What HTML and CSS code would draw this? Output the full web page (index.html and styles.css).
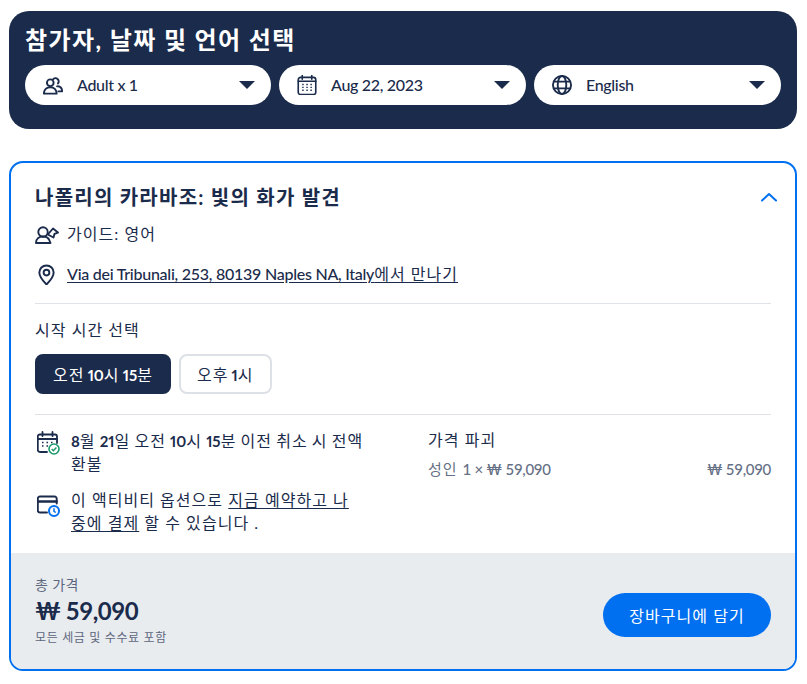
FILE: index.html
```html
<!DOCTYPE html>
<html lang="ko">
<head>
<meta charset="utf-8">
<title>참가자, 날짜 및 언어 선택</title>
<link rel="stylesheet" href="styles.css">
</head>
<body>
<section class="picker">
  <h1 class="picker-title">참가자, 날짜 및 언어 선택</h1>
  <div class="picker-row">
    <div class="pill">
      <svg class="pill-icon" viewBox="1 1 22 22" fill="none" stroke="#1b2b4b" stroke-width="2.100" stroke-linejoin="round" stroke-linecap="round"><circle cx="9" cy="9.500" r="3.700"/><path d="M2 21.500c0-4.500 3-7 7-7s7 2.500 7 7z"/><path d="M12 5.800a3.500 3.500 0 1 1 5.500 4.500"/><path d="M16.500 13.500c3.500-.5 5.500 2 5.500 5.500h-4"/></svg>
      <span class="pill-label la">Adult x 1</span>
      <span class="caret"></span>
    </div>
    <div class="pill">
      <svg class="pill-icon" viewBox="2 1 20 21" fill="none" stroke="#1b2b4b" stroke-width="1.700" stroke-linecap="round"><rect x="2.800" y="3.500" width="18.400" height="18" rx="2.500"/><path d="M7 1.500v4M17 1.500v4M2.800 7.500h18.400"/><path d="M7 11h1.500M11.300 11h1.500M15.600 11h1.500M7 14h1.500M11.300 14h1.500M15.600 14h1.500M7 17h1.500M11.300 17h1.500M15.600 17h1.500" stroke-width="1.500" stroke-linecap="butt"/></svg>
      <span class="pill-label la">Aug 22, 2023</span>
      <span class="caret"></span>
    </div>
    <div class="pill">
      <svg class="pill-icon" viewBox="1.500 1.500 21 21" fill="none" stroke="#1b2b4b" stroke-width="2"><circle cx="12" cy="12" r="9.500"/><ellipse cx="12" cy="12" rx="4.500" ry="9.500"/><path d="M3 8.500h18M3 15.500h18"/></svg>
      <span class="pill-label la">English</span>
      <span class="caret"></span>
    </div>
  </div>
</section>

<section class="card">
  <div class="card-body">
    <div class="card-head">
      <h2 class="card-title">나폴리의 카라바조: 빛의 화가 발견</h2>
      <svg class="chevron" viewBox="0 0 18 10" fill="none" stroke="#0070f0" stroke-width="2" stroke-linecap="round" stroke-linejoin="round"><path d="M2 8.500 9 2l7 6.500"/></svg>
    </div>
    <div class="meta guide">
      <svg class="meta-icon" viewBox="0 0 24 20" fill="none" stroke="#1b2b4b" stroke-width="1.900" stroke-linejoin="round" stroke-linecap="round"><circle cx="8" cy="7" r="4.700"/><path d="M1 18c0-4 3-6.500 7-6.500 2.500 0 5 1 6 3l1.500 3.500z"/><path d="M12.800 9.500 18 3.500l5 4-3.500 1.300-1 3.700z"/></svg>
      <span>가이드: 영어</span>
    </div>
    <div class="meta location">
      <svg class="meta-icon pin" viewBox="3.500 1 17 22" fill="none" stroke="#1b2b4b" stroke-width="2"><path d="M12 22.500C7 17.500 4.500 13.800 4.500 10a7.500 7.500 0 0 1 15 0c0 3.800-2.500 7.500-7.500 12.500z" stroke-linejoin="round"/><circle cx="12" cy="10" r="3"/></svg>
      <a class="link" href="#"><span class="la link-la">Via dei Tribunali, 253, 80139 Naples NA, Italy</span>에서 만나기</a>
    </div>
    <hr class="rule rule-a">
    <div class="time-label">시작 시간 선택</div>
    <div class="times">
      <button class="time time-on">오전 <span class="num">10</span>시 <span class="num">15</span>분</button>
      <button class="time">오후 <span class="num">1</span>시</button>
    </div>
    <hr class="rule rule-b">
    <div class="details">
      <div class="notes">
        <div class="note note-refund">
          <svg class="note-icon" viewBox="1 0 23 24" fill="none"><g stroke="#1b2b4b" stroke-width="1.800" stroke-linecap="round"><path d="M11 21H4a2.200 2.200 0 0 1-2.200-2.200V5.500A2 2 0 0 1 4 3.500h15a2 2 0 0 1 2 2V12"/><path d="M6.500 1v4M16.500 1v4M2 8h19"/><path d="M6 11.500h1.500M10.500 11.500H12M15 11.500h1.500M6 15h1.500M10.500 15H12" stroke-width="1.500" stroke-linecap="butt"/></g><circle cx="18" cy="18" r="5" fill="#fff" stroke="#1a9a6c" stroke-width="1.600"/><path d="m15.700 18 1.700 1.700 3-3.200" stroke="#1a9a6c" stroke-width="1.500"/></svg>
          <p class="note-text"><span class="num">8</span>월 <span class="num">21</span>일 오전 <span class="num">10</span>시 <span class="num">15</span><span>분 이전 취소 시 전액</span><br>환불</p>
        </div>
        <div class="note note-pay">
          <svg class="note-icon" viewBox="1 3 23 21" fill="none"><g stroke="#1b2b4b" stroke-width="1.900" stroke-linecap="round"><path d="M11 20H4a2.200 2.200 0 0 1-2.200-2.200V6.200A2.200 2.200 0 0 1 4 4h14.500a2.200 2.200 0 0 1 2.200 2.200V11"/><path d="M2 9h18.500" stroke-width="2.600"/></g><circle cx="18" cy="18.500" r="5" fill="#fff" stroke="#0070f0" stroke-width="2"/><path d="M18 15.800v3l1.800 1.200" stroke="#0070f0" stroke-width="1.500"/></svg>
          <p class="note-text"><span>이 액티비티 옵션으로 </span><a class="link" href="#">지금 예약하고 나</a><br><a class="link" href="#">중에 결제</a><span> 할 수 있습니다 .</span></p>
        </div>
      </div>
      <div class="breakdown">
        <div class="breakdown-title">가격 파괴</div>
        <div class="breakdown-row"><span>성인 <span class="la">1 × ₩ 59,090</span></span><span class="la">₩ 59,090</span></div>
      </div>
    </div>
  </div>
  <div class="card-foot">
    <div>
      <div class="total-label">총 가격</div>
      <div class="total-price la">₩ 59,090</div>
      <div class="total-note">모든 세금 및 수수료 포함</div>
    </div>
    <button class="cart">장바구니에 담기</button>
  </div>
</section>
</body>
</html>
```
FILE: styles.css
```css
* { box-sizing: border-box; }
html, body { margin: 0; padding: 0; }
body {
  padding: 11px 10px 0 9px;
  background: #fff;
  color: #1b2b4b;
  font-family: Lato, "Noto Sans CJK KR", sans-serif;
  font-size: 16px;
  letter-spacing: 0.065em;
}
.la {
  letter-spacing: -0.02em;
  font-weight: 500;
}
.link-la { letter-spacing: -0.016em; }
.num {
  font-size: 15px;
  font-weight: 700;
  letter-spacing: 0;
  font-variant-numeric: proportional-nums;
}
.picker {
  height: 118px;
  padding: 13px 16px 0;
  background: #1b2b4b;
  border-radius: 20px;
}
.picker-title {
  margin: 0;
  height: 41px;
  font-size: 24px;
  line-height: 32px;
  font-weight: 700;
  letter-spacing: 1.400px;
  color: #fff;
}
.picker-row {
  display: grid;
  grid-template-columns: 246px 247px 247px;
  gap: 8px;
}
.pill {
  height: 40px;
  padding: 0 16px 0 18px;
  display: flex;
  align-items: center;
  background: #fff;
  border-radius: 20px;
}
.pill-icon { width: 20px; height: 20px; margin-right: 14px; flex: none; }
.pill-label { flex: 1; margin-top: -2px; font-size: 16px; white-space: nowrap; }
.caret {
  width: 0;
  height: 0;
  border-left: 8px solid transparent;
  border-right: 8px solid transparent;
  border-top: 8px solid #1b2b4b;
}
.card {
  margin-top: 32px;
  height: 510px;
  display: flex;
  flex-direction: column;
  border: 2px solid #0070f0;
  border-radius: 14px;
  overflow: hidden;
}
.card-body { flex: 1; padding: 0 24px; }
.card-head {
  height: 50px;
  padding-top: 17px;
  display: flex;
  justify-content: space-between;
  align-items: center;
}
.card-title { margin: 0; font-size: 20px; line-height: 28px; font-weight: 700; letter-spacing: 1.250px; }
.chevron { width: 18px; height: 10px; margin-right: -7px; }
.meta { display: flex; align-items: center; line-height: 24px; }
.guide { height: 24px; margin-top: 9px; }
.location { height: 24px; margin-top: 16px; }
.meta-icon { width: 24px; height: 20px; margin: 2px 8px 0 0; flex: none; }
.pin { width: 17px; height: 21px; margin: 0 12px 0 3px; }
.link { color: inherit; text-decoration: underline; text-underline-offset: 2px; }
.rule { margin: 0; border: 0; height: 1px; background: #dfe2e6; }
.rule-a { margin-top: 17px; }
.time-label { margin-top: 14px; line-height: 24px; }
.times { display: flex; gap: 8px; margin-top: 12px; }
.time {
  height: 40px;
  padding: 0 16px;
  background: #fff;
  color: #1b2b4b;
  border: 2px solid #dde1e6;
  border-radius: 8px;
  font: inherit;
  letter-spacing: inherit;
  word-spacing: -2px;
  font-size: 16px;
}
.time-on { background: #1b2b4b; border-color: #1b2b4b; color: #fff; }
.rule-b { margin-top: 20px; }
.details { display: flex; margin-top: 13px; }
.notes { width: 393px; flex: none; padding-top: 2px; }
.note { display: flex; margin-bottom: 14px; }
.note-icon { width: 23px; height: 24px; margin: 1px 11px 0 2px; flex: none; }
.note-pay .note-icon { height: 22px; margin-top: 6px; }
.note-text { margin: 0; width: 294px; line-height: 22.500px; }
.note-refund .note-text { word-spacing: -1px; }
.breakdown { flex: 1; }
.breakdown-title { line-height: 24px; }
.breakdown-row {
  margin-top: 5px;
  display: flex;
  justify-content: space-between;
  line-height: 24px;
  font-size: 15px;
  color: #667085;
}
.card-foot {
  height: 116px;
  flex: none;
  padding: 0 24px;
  display: flex;
  justify-content: space-between;
  align-items: center;
  background: #e9ecef;
}
.total-label { font-size: 14px; line-height: 20px; color: #5c677d; letter-spacing: 0.03em; }
.total-price { font-size: 24px; line-height: 32px; font-weight: 700; }
.total-note { font-size: 12px; line-height: 21px; color: #5c677d; letter-spacing: 0.055em; }
.cart {
  width: 168px;
  height: 44px;
  margin-top: 8px;
  background: #0070f0;
  color: #fff;
  border: 0;
  border-radius: 22px;
  font: inherit;
  letter-spacing: inherit;
  font-size: 16px;
}
```
